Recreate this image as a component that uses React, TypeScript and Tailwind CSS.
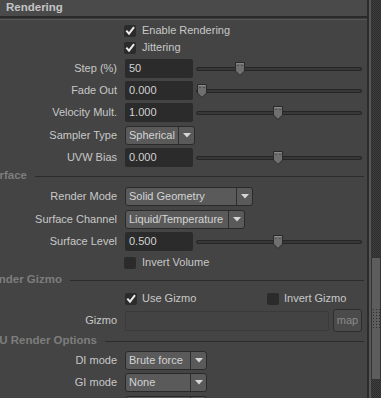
import React from "react";

const FONT = "font-['Liberation_Sans',Arial,sans-serif]";

function Label({ children }: { children?: React.ReactNode }) {
  return (
    <div className="w-[117px] shrink-0 text-right whitespace-nowrap text-[#c8c8c8] text-[11px] leading-none">
      {children}
    </div>
  );
}

function Check({ checked }: { checked: boolean }) {
  return (
    <div className="w-[12px] h-[12px] shrink-0 rounded-[2px] bg-[#2b2b2b] flex items-center justify-center">
      {checked && (
        <svg width="12" height="12" viewBox="0 0 12 12">
          <path d="M2.3 5.6 L5 8.6 L10 2.2" stroke="#ececec" strokeWidth="2" fill="none" />
        </svg>
      )}
    </div>
  );
}

function Thumb({ left }: { left: string }) {
  return (
    <div className={`absolute top-1/2 -translate-y-1/2 ${left} w-[10px] h-[14px]`}>
      <svg width="10" height="14" viewBox="0 0 10 14">
        <polygon points="0.5,0.5 9.5,0.5 9.5,9 5,13.5 0.5,9" fill="#6f6f6f" stroke="#2a2a2a" strokeWidth="1" />
        <line x1="1.5" y1="1.5" x2="8.5" y2="1.5" stroke="#8a8a8a" strokeWidth="1" />
        <rect x="2.5" y="3" width="1" height="1" fill="#333" />
        <rect x="6.5" y="3" width="1" height="1" fill="#333" />
      </svg>
    </div>
  );
}

function SliderRow({ label, value, thumb, mt }: { label: string; value: string; thumb: string; mt: string }) {
  return (
    <div className={`flex items-center h-[19px] shrink-0 ${mt}`}>
      <Label>{label}</Label>
      <div className="ml-[8px] w-[68px] h-[19px] shrink-0 rounded-[2px] bg-[#2b2b2b] pl-[4px] flex items-center text-[11px] text-[#d2d2d2]">
        {value}
      </div>
      <div className="ml-[3px] mr-[5px] flex-1 relative h-[19px] flex items-center">
        <div className="w-full h-[4px] rounded-full bg-[#383838] border border-[#252525]" />
        <Thumb left={thumb} />
      </div>
    </div>
  );
}

function Arrow() {
  return (
    <svg width="8" height="5" viewBox="0 0 8 5">
      <polygon points="0,0 8,0 4,4.5" fill="#d6d6d6" />
    </svg>
  );
}

function DropRow({ label, value, width, mt }: { label: string; value: string; width: string; mt: string }) {
  return (
    <div className={`flex items-center h-[19px] shrink-0 ${mt}`}>
      <Label>{label}</Label>
      <div className={`ml-[8px] ${width} h-[19px] shrink-0 flex rounded-[3px] border border-[#2a2a2a] bg-[#5a5a5a] overflow-hidden`}>
        <div className="flex-1 pl-[3px] flex items-center text-[11px] text-[#d4d4d4] whitespace-nowrap overflow-hidden">
          {value}
        </div>
        <div className="w-[16px] border-l border-[#2e2e2e] flex items-center justify-center">
          <Arrow />
        </div>
      </div>
    </div>
  );
}

function CheckRow({ label, checked, mt }: { label: string; checked: boolean; mt: string }) {
  return (
    <div className={`flex items-center h-[17px] shrink-0 ${mt}`}>
      <div className="w-[124px] shrink-0" />
      <Check checked={checked} />
      <span className="ml-[6px] text-[11px] text-[#c8c8c8] leading-none whitespace-nowrap">{label}</span>
    </div>
  );
}

function Section({ title, end, mt }: { title: string; end: string; mt: string }) {
  return (
    <div className={`flex items-center h-[14px] shrink-0 ${mt}`}>
      <div className={`${end} shrink-0 flex justify-end whitespace-nowrap`}>
        <span className="text-[11.5px] font-bold text-[#7d7d7d] leading-none">{title}</span>
      </div>
      <div className="ml-[8px] mr-[3px] flex-1 h-px bg-[#2c2c2c]" />
    </div>
  );
}

export default function App() {
  return (
    <div className={`${FONT} w-[381px] h-[398px] overflow-hidden bg-[#444444] flex`}>
      <div className="w-[367px] h-full flex flex-col overflow-hidden">
        <div className="h-[16px] shrink-0 bg-[#4a4a4a] flex items-center pl-[6px]">
          <span className="text-[11.5px] font-bold text-[#c4c4c4] leading-none">Rendering</span>
        </div>
        <div className="h-[2px] shrink-0 bg-[#2a2a2a]" />
        <div className="h-[1px] shrink-0 bg-[#3c3c3c]" />
        <div className="h-[1px] shrink-0 bg-[#575757]" />

        <CheckRow label="Enable Rendering" checked mt="mt-[2px]" />
        <CheckRow label="Jittering" checked mt="mt-0" />

        <SliderRow label="Step (%)" value="50" thumb="left-[39px]" mt="mt-[3px]" />
        <SliderRow label="Fade Out" value="0.000" thumb="left-[1px]" mt="mt-[3px]" />
        <SliderRow label="Velocity Mult." value="1.000" thumb="left-[77px]" mt="mt-[3px]" />
        <DropRow label="Sampler Type" value="Spherical" width="w-[70px]" mt="mt-[4px]" />
        <SliderRow label="UVW Bias" value="0.000" thumb="left-[77px]" mt="mt-[3px]" />

        <Section title="Surface" end="w-[27px]" mt="mt-[2px]" />

        <DropRow label="Render Mode" value="Solid Geometry" width="w-[128px]" mt="mt-[4px]" />
        <DropRow label="Surface Channel" value="Liquid/Temperature" width="w-[120px]" mt="mt-[4px]" />
        <SliderRow label="Surface Level" value="0.500" thumb="left-[77px]" mt="mt-[3px]" />
        <CheckRow label="Invert Volume" checked={false} mt="mt-[3px]" />

        <Section title="Render Gizmo" end="w-[62px]" mt="mt-[2px]" />

        <div className="flex items-center h-[17px] shrink-0 mt-[3px]">
          <div className="w-[125px] shrink-0" />
          <div className="w-[142px] shrink-0 flex items-center">
            <Check checked />
            <span className="ml-[5px] text-[11px] text-[#c8c8c8] leading-none">Use Gizmo</span>
          </div>
          <Check checked={false} />
          <span className="ml-[5px] text-[11px] text-[#c8c8c8] leading-none">Invert Gizmo</span>
        </div>

        <div className="flex items-center h-[23px] shrink-0 mt-[2px]">
          <Label>Gizmo</Label>
          <div className="ml-[8px] w-[204px] h-[20px] shrink-0 rounded-[2px] border border-[#3a3a3a] bg-[#434343]" />
          <div className="ml-[4px] w-[29px] h-[23px] shrink-0 rounded-[3px] border border-[#2d2d2d] bg-[#4b4b4b] flex items-center justify-center text-[11px] text-[#8a8a8a]">
            map
          </div>
        </div>

        <Section title="GPU Render Options" end="w-[97px]" mt="mt-[2px]" />

        <DropRow label="DI mode" value="Brute force" width="w-[82px]" mt="mt-[3px]" />
        <DropRow label="GI mode" value="None" width="w-[82px]" mt="mt-[3px]" />
        <DropRow label="" value="" width="w-[82px]" mt="mt-[4px]" />
      </div>

      <div className="w-[2px] h-full bg-[#2b2b2b]" />
      <div className="w-[2px] h-full bg-[#575757]" />

      <div className="w-[10px] h-full flex flex-col bg-[repeating-conic-gradient(#2c2c2c_0%_25%,#3f3f3f_0%_50%)] bg-[length:2px_2px]">
        <div className="h-[257px] shrink-0" />
        <div className="h-[123px] shrink-0 bg-[#5d5d5d] border border-[#333333] flex items-center justify-center">
          <svg width="7" height="19" viewBox="0 0 7 19">
            {[0, 3, 6, 9, 12, 15, 18].map((y) =>
              [0, 3, 6].map((x) => <rect key={`${x}-${y}`} x={x} y={y} width="1" height="1" fill="#2e2e2e" />)
            )}
          </svg>
        </div>
      </div>
    </div>
  );
}
